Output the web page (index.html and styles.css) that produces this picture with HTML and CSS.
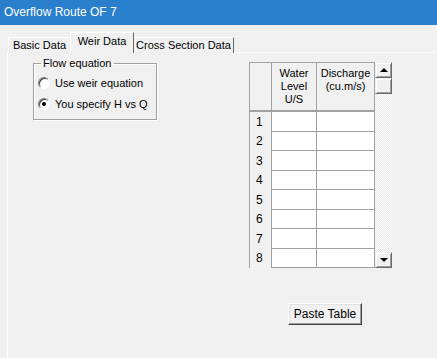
FILE: index.html
```html
<!DOCTYPE html>
<html lang="en">
<head>
    <meta charset="UTF-8">
    <title>Overflow Route OF 7</title>
    <link rel="stylesheet" href="styles.css">
</head>
<body>
    <div class="titlebar">Overflow Route OF 7</div>

    <div class="tabs">
        <div class="tab tab-basic">Basic Data</div>
        <div class="tab tab-weir active">Weir Data</div>
        <div class="tab tab-cross">Cross Section Data</div>
    </div>

    <div class="panel">
        <fieldset class="group">
            <legend>Flow equation</legend>
            <label class="option"><span class="radio"></span>Use weir equation</label>
            <label class="option"><span class="radio checked"></span>You specify H vs Q</label>
        </fieldset>

        <div class="table-side">
            <div class="grid-wrap">
                <table class="grid">
                    <thead>
                        <tr>
                            <th class="rowhead"></th>
                            <th class="col-level">Water<br>Level<br>U/S</th>
                            <th class="col-q">Discharge<br>(cu.m/s)</th>
                        </tr>
                    </thead>
                    <tbody id="gridBody">
                        <!-- rows filled by script -->
                    </tbody>
                </table>
                <div class="scrollbar">
                    <div class="sb-btn"><span class="arrow up"></span></div>
                    <div class="sb-thumb"></div>
                    <div class="sb-track"></div>
                    <div class="sb-btn"><span class="arrow down"></span></div>
                </div>
            </div>
            <button class="btn">Paste Table</button>
        </div>
    </div>

    <script>
        const gridBody = document.getElementById('gridBody');
        for (let i = 1; i <= 8; i++) {
            const row = document.createElement('tr');
            row.innerHTML = `
                <td class="rowhead">${i}</td>
                <td></td>
                <td></td>
            `;
            gridBody.appendChild(row);
        }
    </script>
</body>
</html>
```

FILE: styles.css
```css
body {
    margin: 0;
    background-color: #f0f0f0;
    font-family: 'Liberation Sans', Arial, sans-serif;
    font-size: 11px;
    color: #000;
    overflow: hidden;
}
.titlebar {
    height: 25px;
    line-height: 24px;
    padding-left: 4px;
    background-color: #2a7fcc;
    color: #fff;
    font-size: 12px;
}

/* tabs */
.tabs {
    display: flex;
    align-items: flex-end;
    height: 20px;
    margin-top: 8px;
    padding-left: 8px;
}
.tab {
    box-sizing: border-box;
    height: 16px;
    line-height: 14px;
    text-align: center;
    border: 1px solid;
    border-bottom: none;
    border-color: #fff #696969 #696969 #fff;
    background-color: #f0f0f0;
}
.tab-basic {
    width: 63px;
}
.tab-weir {
    width: 64px;
}
.tab-cross {
    width: 101px;
}
.tab.active {
    position: relative;
    z-index: 1;
    height: 21px;
    line-height: 17px;
    margin-left: -1px;
    margin-right: -1px;
}
.panel {
    display: flex;
    align-items: flex-start;
    height: 320px;
    margin-top: -1px;
    margin-left: 7px;
    border-top: 1px solid #fff;
    border-left: 1px solid #fff;
}

/* group box */
.group {
    width: 124px;
    box-sizing: border-box;
    margin: 4px 0 0 25px;
    padding: 0 0 5px 4px;
    border: 1px solid #a0a0a0;
    box-shadow: 1px 1px 0 #fff, inset 1px 1px 0 #fff;
}
.group legend {
    margin-left: 3px;
    padding: 0 2px;
    line-height: 13px;
}
.option {
    display: flex;
    align-items: center;
    height: 21px;
}
.option:first-of-type {
    margin-top: 2px;
}
.radio {
    box-sizing: border-box;
    width: 12px;
    height: 12px;
    margin-right: 5px;
    border-radius: 50%;
    border: 1px solid;
    border-color: #808080 #fff #fff #808080;
    background-color: #fff;
    box-shadow: inset 1px 1px 0 #404040;
    position: relative;
}
.radio.checked::after {
    content: '';
    position: absolute;
    left: 3px;
    top: 3px;
    width: 4px;
    height: 4px;
    border-radius: 50%;
    background-color: #000;
}

/* grid */
.table-side {
    margin: 9px 0 0 92px;
}
.grid-wrap {
    display: flex;
    height: 206px;
    overflow: hidden;
}
.grid {
    table-layout: fixed;
    border-collapse: separate;
    border-spacing: 0;
    width: 126px;
    align-self: flex-start;
    border-left: 1px solid #a0a0a0;
    border-top: 1px solid #a0a0a0;
    background-color: #fff;
}
.grid th {
    height: 49px;
    padding: 4px 0 0;
    vertical-align: top;
    font-weight: normal;
    line-height: 13px;
    background-color: #f0f0f0;
    border-right: 1px solid #a0a0a0;
    border-bottom: 2px solid #a0a0a0;
    box-sizing: border-box;
}
.grid th.rowhead {
    width: 22px;
}
.grid th.col-level {
    width: 45px;
}
.grid th.col-q {
    width: 58px;
}
.grid td {
    height: 19.5px;
    padding: 0;
    box-sizing: border-box;
    border-right: 1px solid #a0a0a0;
    border-bottom: 1px solid #a0a0a0;
}
.grid td.rowhead {
    padding-left: 6px;
    font-size: 12px;
    background-color: #f0f0f0;
    border-bottom: none;
}

/* scrollbar */
.scrollbar {
    display: flex;
    flex-direction: column;
    width: 17px;
}
.sb-btn, .sb-thumb {
    box-sizing: border-box;
    height: 16px;
    display: flex;
    align-items: center;
    justify-content: center;
    background-color: #f0f0f0;
    border: 1px solid;
    border-color: #f0f0f0 #696969 #696969 #f0f0f0;
    box-shadow: inset 1px 1px 0 #fff, inset -1px -1px 0 #a0a0a0;
}
.sb-track {
    flex: 1;
    background: repeating-conic-gradient(#fff 0 25%, #e8e8e8 0 50%) 0 0 / 2px 2px;
}
.arrow {
    width: 0;
    height: 0;
    border-left: 4px solid transparent;
    border-right: 4px solid transparent;
}
.arrow.up {
    border-bottom: 4px solid #000;
}
.arrow.down {
    border-top: 4px solid #000;
}

/* button */
.btn {
    display: block;
    width: 74px;
    height: 22px;
    margin: 35px 0 0 39px;
    padding: 0;
    font-family: inherit;
    font-size: 12px;
    background-color: #f0f0f0;
    border: 1px solid;
    border-color: #fff #404040 #404040 #fff;
    box-shadow: inset -1px -1px 0 #a0a0a0, inset 1px 1px 0 #e3e3e3;
}
```
